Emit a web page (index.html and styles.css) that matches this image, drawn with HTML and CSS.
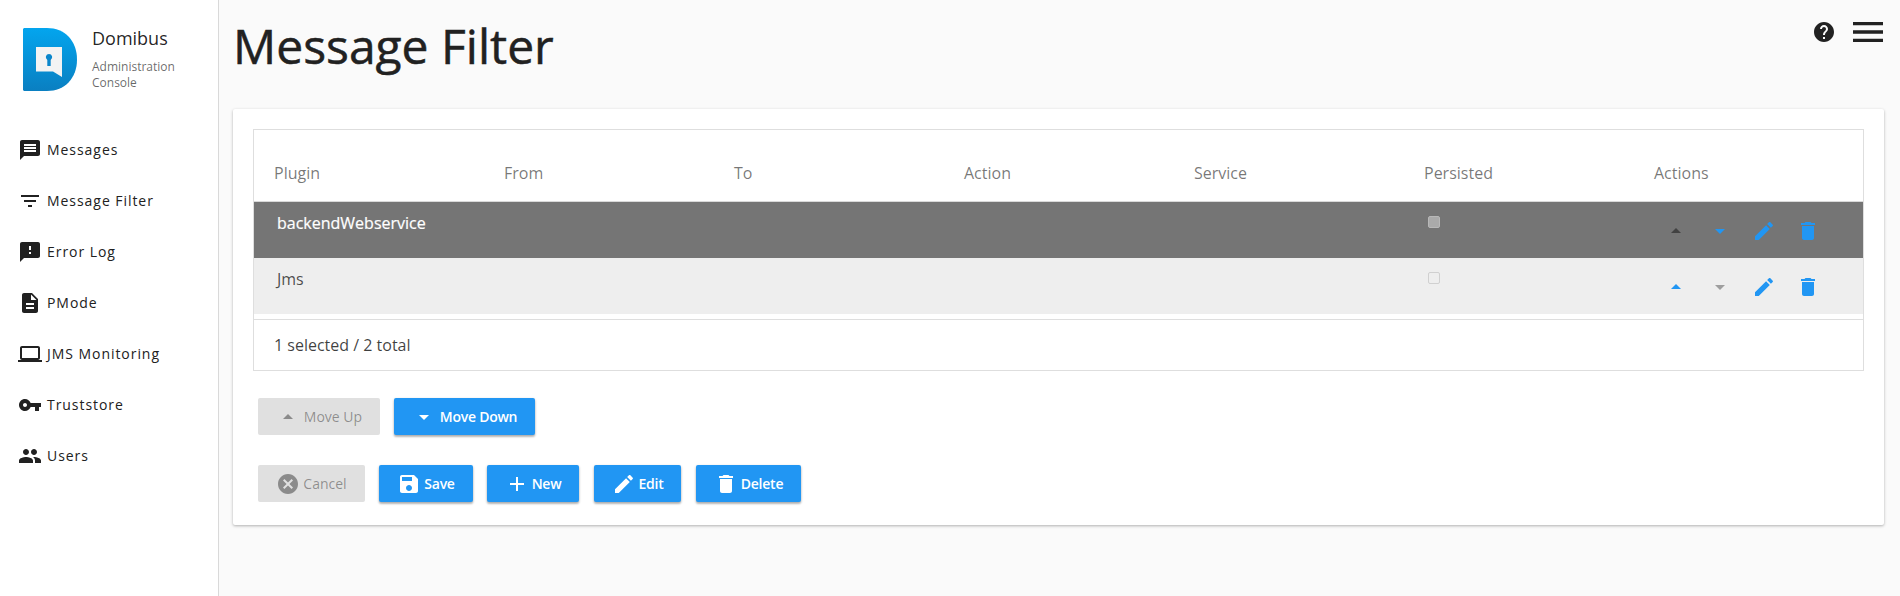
FILE: index.html
```html
<!DOCTYPE html>
<html lang="en">
<head>
<meta charset="utf-8">
<title>Message Filter</title>
<link rel="stylesheet" href="styles.css">
</head>
<body>
<svg class="sprites" aria-hidden="true">
  <symbol id="i-message" viewBox="0 0 24 24"><path d="M20 2H4c-1.1 0-1.99.9-1.99 2L2 22l4-4h14c1.1 0 2-.9 2-2V4c0-1.1-.9-2-2-2zm-2 12H6v-2h12v2zm0-3H6V9h12v2zm0-3H6V6h12v2z"/></symbol>
  <symbol id="i-filter" viewBox="0 0 24 24"><path d="M10 18h4v-2h-4v2zM3 6v2h18V6H3zm3 7h12v-2H6v2z"/></symbol>
  <symbol id="i-feedback" viewBox="0 0 24 24"><path d="M20 2H4c-1.1 0-1.99.9-1.99 2L2 22l4-4h14c1.1 0 2-.9 2-2V4c0-1.1-.9-2-2-2zm-7 12h-2v-2h2v2zm0-4h-2V6h2v4z"/></symbol>
  <symbol id="i-doc" viewBox="0 0 24 24"><path d="M14 2H6c-1.1 0-1.99.9-1.99 2L4 20c0 1.1.89 2 1.99 2H18c1.1 0 2-.9 2-2V8l-6-6zm2 16H8v-2h8v2zm0-4H8v-2h8v2zm-3-5V3.5L18.5 9H13z"/></symbol>
  <symbol id="i-laptop" viewBox="0 0 24 24"><path d="M20 18c1.1 0 1.99-.9 1.99-2L22 6c0-1.1-.9-2-2-2H4c-1.1 0-2 .9-2 2v10c0 1.1.9 2 2 2H0v2h24v-2h-4zM4 6h16v10H4V6z"/></symbol>
  <symbol id="i-key" viewBox="0 0 24 24"><path d="M12.65 10C11.83 7.67 9.61 6 7 6c-3.31 0-6 2.69-6 6s2.69 6 6 6c2.61 0 4.83-1.67 5.65-4H17v4h4v-4h2v-4H12.65zM7 14c-1.1 0-2-.9-2-2s.9-2 2-2 2 .9 2 2-.9 2-2 2z"/></symbol>
  <symbol id="i-people" viewBox="0 0 24 24"><path d="M16 11c1.66 0 2.99-1.34 2.99-3S17.66 5 16 5c-1.66 0-3 1.34-3 3s1.34 3 3 3zm-8 0c1.66 0 2.99-1.34 2.99-3S9.66 5 8 5C6.34 5 5 6.34 5 8s1.34 3 3 3zm0 2c-2.33 0-7 1.17-7 3.5V19h14v-2.5c0-2.33-4.67-3.5-7-3.5zm8 0c-.29 0-.62.02-.97.05 1.16.84 1.97 1.97 1.97 3.45V19h6v-2.5c0-2.33-4.67-3.5-7-3.5z"/></symbol>
  <symbol id="i-help" viewBox="0 0 24 24"><path d="M12 2C6.48 2 2 6.48 2 12s4.48 10 10 10 10-4.48 10-10S17.52 2 12 2zm1 17h-2v-2h2v2zm2.07-7.75l-.9.92C13.45 12.9 13 13.5 13 15h-2v-.5c0-1.1.45-2.1 1.17-2.83l1.24-1.26c.37-.36.59-.86.59-1.41 0-1.1-.9-2-2-2s-2 .9-2 2H8c0-2.21 1.79-4 4-4s4 1.79 4 4c0 .88-.36 1.68-.93 2.25z"/></symbol>
  <symbol id="i-menu" viewBox="0 0 24 24"><path d="M3 18h18v-2H3v2zm0-5h18v-2H3v2zm0-7v2h18V6H3z"/></symbol>
  <symbol id="i-up" viewBox="0 0 24 24"><path d="M7 14l5-5 5 5z"/></symbol>
  <symbol id="i-down" viewBox="0 0 24 24"><path d="M7 10l5 5 5-5z"/></symbol>
  <symbol id="i-edit" viewBox="0 0 24 24"><path d="M3 17.25V21h3.75L17.81 9.94l-3.75-3.75L3 17.25zM20.71 7.04c.39-.39.39-1.02 0-1.41l-2.34-2.34c-.39-.39-1.02-.39-1.41 0l-1.83 1.83 3.75 3.75 1.83-1.83z"/></symbol>
  <symbol id="i-delete" viewBox="0 0 24 24"><path d="M6 19c0 1.1.9 2 2 2h8c1.1 0 2-.9 2-2V7H6v12zM19 4h-3.5l-1-1h-5l-1 1H5v2h14V4z"/></symbol>
  <symbol id="i-save" viewBox="0 0 24 24"><path d="M17 3H5c-1.11 0-2 .9-2 2v14c0 1.1.89 2 2 2h14c1.1 0 2-.9 2-2V7l-4-4zm-5 16c-1.66 0-3-1.34-3-3s1.34-3 3-3 3 1.34 3 3-1.34 3-3 3zm3-10H5V5h10v4z"/></symbol>
  <symbol id="i-add" viewBox="0 0 24 24"><path d="M19 13h-6v6h-2v-6H5v-2h6V5h2v6h6v2z"/></symbol>
  <symbol id="i-cancel" viewBox="0 0 24 24"><path d="M12 2C6.47 2 2 6.47 2 12s4.47 10 10 10 10-4.47 10-10S17.53 2 12 2zm5 13.59L15.59 17 12 13.41 8.41 17 7 15.59 10.59 12 7 8.41 8.41 7 12 10.59 15.59 7 17 8.41 13.41 12 17 15.59z"/></symbol>
</svg>

<div class="app">
  <aside class="sidebar">
    <div class="brand">
      <svg class="logo" viewBox="0 0 54 63">
        <defs>
          <linearGradient id="logo-grad" x1="0" y1="0" x2="0" y2="1">
            <stop offset="0" stop-color="#03a5ee"/>
            <stop offset="1" stop-color="#0a7fc1"/>
          </linearGradient>
        </defs>
        <path fill="url(#logo-grad)" d="M1 0H24C42 0 54 13 54 31.500C54 50 42 63 24 63H1L0 62V1Z"/>
        <path fill="#f3f3f3" d="M13 19H39V49L30 43.500H13Z"/>
        <path fill="#0a86cb" d="M26 26a3.200 3.200 0 0 1 1.700 5.900V38H24.300V31.900A3.200 3.200 0 0 1 26 26Z"/>
      </svg>
      <div class="brand-text">
        <div class="brand-name">Domibus</div>
        <div class="brand-sub">Administration Console</div>
      </div>
    </div>
    <nav class="nav">
      <a class="nav-item"><svg class="nav-icon"><use href="#i-message"/></svg><span>Messages</span></a>
      <a class="nav-item"><svg class="nav-icon"><use href="#i-filter"/></svg><span>Message Filter</span></a>
      <a class="nav-item"><svg class="nav-icon"><use href="#i-feedback"/></svg><span>Error Log</span></a>
      <a class="nav-item"><svg class="nav-icon"><use href="#i-doc"/></svg><span>PMode</span></a>
      <a class="nav-item"><svg class="nav-icon"><use href="#i-laptop"/></svg><span>JMS Monitoring</span></a>
      <a class="nav-item"><svg class="nav-icon"><use href="#i-key"/></svg><span>Truststore</span></a>
      <a class="nav-item"><svg class="nav-icon"><use href="#i-people"/></svg><span>Users</span></a>
    </nav>
  </aside>

  <main class="main">
    <header class="topbar">
      <h1 class="title">Message Filter</h1>
      <div class="top-icons">
        <svg class="help-icon"><use href="#i-help"/></svg>
        <svg class="menu-icon"><use href="#i-menu"/></svg>
      </div>
    </header>

    <section class="card">
      <div class="table">
        <div class="thead">
          <div>Plugin</div><div>From</div><div>To</div><div>Action</div><div>Service</div><div>Persisted</div><div>Actions</div>
        </div>
        <div class="row row-selected">
          <div class="cell">backendWebservice</div><div></div><div></div><div></div><div></div>
          <div class="cell-check"><span class="check"></span></div>
          <div class="cell-actions">
            <svg class="act act-up"><use href="#i-up"/></svg>
            <svg class="act act-down"><use href="#i-down"/></svg>
            <svg class="act act-edit"><use href="#i-edit"/></svg>
            <svg class="act act-del"><use href="#i-delete"/></svg>
          </div>
        </div>
        <div class="row row-plain">
          <div class="cell">Jms</div><div></div><div></div><div></div><div></div>
          <div class="cell-check"><span class="check"></span></div>
          <div class="cell-actions">
            <svg class="act act-up"><use href="#i-up"/></svg>
            <svg class="act act-down"><use href="#i-down"/></svg>
            <svg class="act act-edit"><use href="#i-edit"/></svg>
            <svg class="act act-del"><use href="#i-delete"/></svg>
          </div>
        </div>
        <div class="tfoot">1 selected / 2 total</div>
      </div>

      <div class="btn-row btn-row-move">
        <button class="btn btn-off btn-up"><svg class="btn-arrow"><use href="#i-up"/></svg>Move Up</button>
        <button class="btn btn-on btn-movedown"><svg class="btn-arrow"><use href="#i-down"/></svg>Move Down</button>
      </div>
      <div class="btn-row btn-row-main">
        <button class="btn btn-off btn-cancel"><svg class="btn-icon"><use href="#i-cancel"/></svg>Cancel</button>
        <button class="btn btn-on btn-save"><svg class="btn-icon"><use href="#i-save"/></svg>Save</button>
        <button class="btn btn-on btn-new"><svg class="btn-icon"><use href="#i-add"/></svg>New</button>
        <button class="btn btn-on btn-edit"><svg class="btn-icon"><use href="#i-edit"/></svg>Edit</button>
        <button class="btn btn-on btn-delete"><svg class="btn-icon"><use href="#i-delete"/></svg>Delete</button>
      </div>
    </section>
  </main>
</div>
</body>
</html>
```
FILE: styles.css
```css
* { box-sizing: border-box; }
html, body { height: 100%; }
body {
  margin: 0;
  background: #fafafa;
  font-family: "Open Sans", sans-serif;
  color: rgba(0, 0, 0, 0.87);
  overflow: hidden;
}
.sprites { display: none; }
.app { display: flex; height: 596px; }

/* sidebar */
.sidebar {
  width: 219px;
  flex: none;
  background: #fff;
  border-right: 1px solid #d9d9d9;
}
.brand { display: flex; padding: 28px 0 0 23px; height: 124px; }
.logo { width: 54px; height: 63px; flex: none; }
.brand-text { margin-left: 15px; }
.brand-name { font-size: 18px; line-height: 24px; margin-top: -2px; }
.brand-sub {
  font-size: 12px;
  line-height: 16px;
  margin-top: 9px;
  width: 100px;
  color: rgba(0, 0, 0, 0.6);
}
.nav { display: flex; flex-direction: column; }
.nav-item {
  display: flex;
  align-items: center;
  height: 51px;
  padding-left: 18px;
  font-size: 14px;
  letter-spacing: 0.95px;
  color: #212121;
}
.nav-icon { width: 24px; height: 24px; fill: #212121; flex: none; margin-right: 5px; }

/* header */
.main { flex: 1; min-width: 0; padding: 0 16px 0 14px; }
.topbar { display: flex; justify-content: space-between; height: 109px; }
.title {
  margin: 13px 0 0;
  font-size: 48px;
  line-height: 65px;
  font-weight: 400;
  -webkit-text-stroke: 0.5px #212121;
  color: #212121;
}
.top-icons { display: flex; align-items: center; height: 64px; gap: 12px; margin-right: -4px; }
.help-icon { width: 24px; height: 24px; fill: #212121; }
.menu-icon { width: 40px; height: 40px; fill: #212121; }

/* card */
.card {
  height: 416px;
  padding: 20px 20px 0;
  background: #fff;
  box-shadow: 0 1px 3px rgba(0, 0, 0, 0.3);
  border-radius: 2px;
}
.table {
  border: 1px solid #dedede;
  height: 242px;
  background: #fff;
}
.thead, .row { display: grid; grid-template-columns: repeat(7, 230px); }
.thead {
  height: 72px;
  padding-top: 32px;
  font-size: 16px;
  line-height: 22px;
  color: rgba(0, 0, 0, 0.54);
  border-bottom: 1px solid #d9d9d9;
}
.thead div { padding-left: 20px; }
.row { height: 56px; font-size: 16px; line-height: 22px; }
.row-selected { background: #757575; color: #fff; -webkit-text-stroke: 0.2px #fff; }
.row-plain { background: #eeeeee; color: rgba(0, 0, 0, 0.7); }
.cell { padding: 10px 0 0 23px; white-space: nowrap; }
.cell-check { padding: 14px 0 0 24px; }
.check {
  display: block;
  width: 12px;
  height: 12px;
  border-radius: 2px;
  border: 1px solid #d0d0d0;
  background: #eeeeee;
}
.row-selected .check { background: #aaaaaa; border-color: #b8b8b8; }
.cell-actions { display: flex; align-items: center; height: 56px; padding: 2px 0 0 11px; gap: 20px; margin-left: 19px; }
.act { width: 24px; height: 24px; flex: none; fill: #2196f3; }
.row-selected .act-up { fill: #424242; }
.row-plain .act-down { fill: #9e9e9e; }
.tfoot {
  height: 51px;
  margin-top: 5px;
  padding: 14px 0 0 20px;
  border-top: 1px solid #dedede;
  font-size: 16px;
  line-height: 22px;
  color: rgba(0, 0, 0, 0.75);
}

/* buttons */
.btn-row { display: flex; padding-left: 5px; }
.btn-row-move { margin-top: 27px; gap: 14px; }
.btn-row-main { margin-top: 30px; gap: 14px; }
.btn {
  display: flex;
  align-items: center;
  justify-content: center;
  height: 37px;
  padding: 0;
  border: 0;
  border-radius: 2px;
  font-family: "Open Sans", sans-serif;
  font-size: 14px;
  letter-spacing: -0.25px;
  white-space: nowrap;
}
.btn-on {
  background: #2196f3;
  color: #fff;
  font-weight: 600;
  box-shadow: 0 2px 2px rgba(0, 0, 0, 0.2), 0 1px 3px rgba(0, 0, 0, 0.2);
}
.btn-off { background: #e0e0e0; color: rgba(0, 0, 0, 0.38); letter-spacing: 0; }
.btn-up { width: 122px; }
.btn-movedown { width: 141px; }
.btn-cancel { width: 107px; }
.btn-save { width: 94px; }
.btn-new { width: 92px; }
.btn-edit { width: 87px; margin-left: 1px; }
.btn-delete { width: 105px; margin-left: 1px; }
.btn-arrow { width: 24px; height: 24px; fill: currentColor; margin-right: 4px; }
.btn-icon { width: 24px; height: 24px; fill: currentColor; margin-right: 3px; }
```
